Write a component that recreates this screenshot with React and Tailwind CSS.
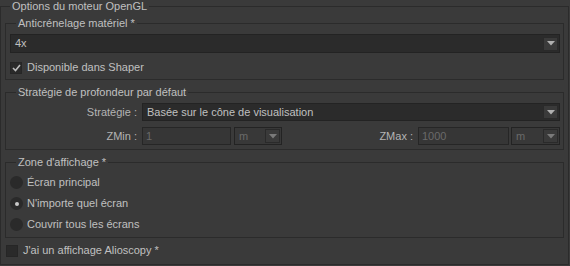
import React, { useState } from "react";

const Arrow = ({ disabled }) => (
  <svg width="8" height="5" viewBox="0 0 8 5">
    <polygon points="0,0 8,0 4,4.5" fill={disabled ? "#7a7a7a" : "#b0b0b0"} />
  </svg>
);

const Select = ({ value, className = "", disabled = false }) => (
  <div
    className={`flex items-center border border-[#232323] ${disabled ? "bg-[#383838] text-[#6a6a6a]" : "bg-[#2b2b2b] text-[#c0c0c0]"} ${className}`}
  >
    <span className="flex-1 pl-[4px] truncate">{value}</span>
    <div className="w-[15px] h-[14px] mr-[1px] flex items-center justify-center border border-[#2a2a2a] bg-[#3a3a3a]">
      <Arrow disabled={disabled} />
    </div>
  </div>
);

const GroupBox = ({ title, className = "", children }) => (
  <fieldset className={`border border-[#2b2b2b] ${className}`}>
    <legend className="ml-[6px] px-[2px] leading-[12px] text-[#c0c0c0]">{title}</legend>
    {children}
  </fieldset>
);

const Checkbox = ({ checked, label, className = "" }) => (
  <label className={`flex items-center ${className}`}>
    <span className="w-[12px] h-[12px] bg-[#2a2a2a] border border-[#262626] flex items-center justify-center">
      {checked && (
        <svg width="9" height="8" viewBox="0 0 9 8">
          <path d="M1 4 L3.5 6.5 L8 1" stroke="#bcbcbc" strokeWidth="1.6" fill="none" />
        </svg>
      )}
    </span>
    <span className="ml-[5px] text-[#c0c0c0]">{label}</span>
  </label>
);

const Radio = ({ checked, label, onClick }) => (
  <div className="flex items-center h-[21px]" onClick={onClick}>
    <span className="w-[13px] h-[13px] rounded-full bg-[#2a2a2a] flex items-center justify-center">
      {checked && <span className="w-[4px] h-[4px] rounded-full bg-[#c8c8c8]" />}
    </span>
    <span className="ml-[4px] text-[#c0c0c0]">{label}</span>
  </div>
);

const DisabledInput = ({ value, className = "" }) => (
  <div className={`h-[18px] flex items-center border border-[#262626] bg-[#363636] text-[#6a6a6a] pl-[3px] ${className}`}>
    {value}
  </div>
);

export default function App() {
  const [zone, setZone] = useState(1);
  const zones = ["Écran principal", "N'importe quel écran", "Couvrir tous les écrans"];

  return (
    <div
      className="w-[570px] h-[266px] bg-[#3a3a3a] text-[11px] leading-[13px] overflow-hidden"
      style={{ fontFamily: '"Liberation Sans", Arial, sans-serif' }}
    >
      <fieldset className="w-[569px] h-[265px] border border-[#2b2b2b] px-[4px]">
        <legend className="ml-[5px] px-[2px] leading-[12px] text-[#c0c0c0]">Options du moteur OpenGL</legend>

        {/* Anticrénelage */}
        <GroupBox title="Anticrénelage matériel *" className="mt-[5px] pl-[4px] pr-[3px] pt-[5px] pb-[5px]">
          <Select value="4x" className="h-[19px]" />
          <Checkbox checked label="Disponible dans Shaper" className="mt-[8px] h-[13px]" />
        </GroupBox>

        {/* Profondeur */}
        <GroupBox title="Stratégie de profondeur par défaut" className="mt-[6px] pl-[4px] pr-[3px] pt-[5px] pb-[4px]">
          <div className="flex items-center">
            <span className="w-[127px] mr-[5px] text-right text-[#b4b4b4]">Stratégie :</span>
            <Select value="Basée sur le cône de visualisation" className="flex-1 h-[18px]" />
          </div>
          <div className="flex items-center mt-[6px]">
            <span className="w-[127px] mr-[5px] text-right text-[#b4b4b4]">ZMin :</span>
            <DisabledInput value="1" className="w-[89px]" />
            <Select value="m" disabled className="w-[48px] h-[18px] ml-[3px]" />
            <div className="ml-auto flex items-center">
              <span className="mr-[5px] text-[#b4b4b4]">ZMax :</span>
              <DisabledInput value="1000" className="w-[91px]" />
              <Select value="m" disabled className="w-[49px] h-[18px] ml-[2px]" />
            </div>
          </div>
        </GroupBox>

        {/* Zone d'affichage */}
        <GroupBox title="Zone d'affichage *" className="mt-[6px] pl-[4px] pr-[3px] pt-[4px] pb-[2px]">
          {zones.map((z, i) => (
            <Radio key={z} label={z} checked={zone === i} onClick={() => setZone(i)} />
          ))}
        </GroupBox>

        <Checkbox label="J'ai un affichage Alioscopy *" className="mt-[5px] ml-[1px] h-[15px]" />
      </fieldset>
    </div>
  );
}
